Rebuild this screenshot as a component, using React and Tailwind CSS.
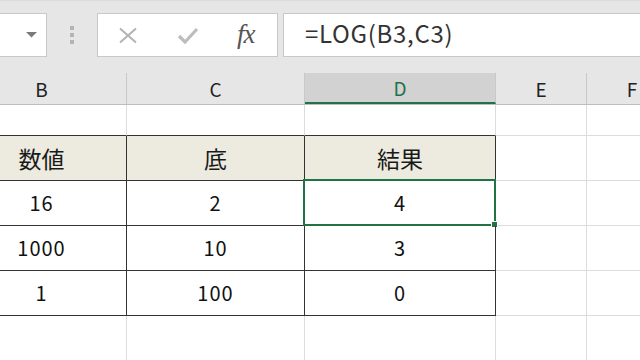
import React from "react";

function HeaderCell({ label, w, selected }) {
  return (
    <div
      className={
        "h-full flex items-center justify-center shrink-0 border-r border-[#c8c8c8] text-[19px] " +
        (selected
          ? "bg-[#d2d2d2] text-[#217346] border-b-2 border-b-[#217346]"
          : "text-[#222]")
      }
      style={{ width: w }}
    >
      <span className="leading-none">{label}</span>
    </div>
  );
}

export default function App() {
  const data = [
    ["16", "2", "4"],
    ["1000", "10", "3"],
    ["1", "100", "0"],
  ];
  return (
    <div className="w-[640px] h-[360px] overflow-hidden bg-white font-['Noto_Sans_CJK_JP','Noto_Sans',sans-serif] text-[#222]">
      {/* toolbar */}
      <div className="h-[73px] bg-[#e6e6e6] border-t border-[#dcdcdc] flex items-start pt-[12px]">
        <div className="w-[47px] h-[44px] shrink-0 bg-white border border-l-0 border-[#c8c8c8] flex items-center justify-end pr-[9px]">
          <svg width="11" height="6" viewBox="0 0 11 6">
            <polygon points="0,0 11,0 5.5,5.5" fill="#7a7a7a" />
          </svg>
        </div>
        <div className="w-[50px] h-[44px] shrink-0 flex flex-col items-center justify-center gap-[3px]">
          <div className="w-[4px] h-[4px] bg-[#b4b4b4]" />
          <div className="w-[4px] h-[4px] bg-[#b4b4b4]" />
          <div className="w-[4px] h-[4px] bg-[#b4b4b4]" />
        </div>
        <div className="w-[181px] h-[44px] shrink-0 bg-white border border-[#c8c8c8] flex items-center pl-[20px]">
          <svg width="20" height="17" viewBox="0 0 20 17" className="shrink-0">
            <path d="M2 1.5 L18 15.5 M18 1.5 L2 15.5" stroke="#b2b2b2" strokeWidth="2" fill="none" />
          </svg>
          <svg width="22" height="17" viewBox="0 0 22 17" className="shrink-0 ml-[39px]">
            <path d="M2 9 L8 15 L20 2" stroke="#bdbdbd" strokeWidth="3.2" fill="none" />
          </svg>
          <span className="ml-[38px] font-['Liberation_Serif',serif] italic text-[27px] leading-none text-[#555] tracking-[-1px] pb-[2px]">
            fx
          </span>
        </div>
        <div className="ml-[5px] w-[400px] h-[44px] shrink-0 bg-white border border-[#c8c8c8] flex items-center pl-[21px] pb-[4px]">
          <span className="text-[24px] leading-none text-[#333] tracking-[0.7px]">=LOG(B3,C3)</span>
        </div>
      </div>

      {/* column headers */}
      <div className="h-[32px] flex -ml-[43px] bg-[#e6e6e6] border-b border-[#bdbdbd]">
        <HeaderCell label="B" w={170} />
        <HeaderCell label="C" w={178} />
        <HeaderCell label="D" w={191} selected />
        <HeaderCell label="E" w={91} />
        <HeaderCell label="F" w={91} />
      </div>

      {/* grid */}
      <div className="grid grid-cols-[170px_178px_191px_91px_91px] -ml-[43px] grid-rows-[31px_45px_45px_45px_45px_45px]">
        {/* row 1 */}
        <div className="border-r border-r-[#dcdcdc] border-b border-b-[#333]" />
        <div className="border-r border-r-[#dcdcdc] border-b border-b-[#333]" />
        <div className="border-r border-r-[#dcdcdc] border-b border-b-[#333]" />
        <div className="border-r border-b border-[#dcdcdc]" />
        <div className="border-r border-b border-[#dcdcdc]" />

        {/* table header */}
        {["数値", "底", "結果"].map((t) => (
          <div
            key={t}
            className="bg-[#edebe0] border-r border-b border-[#333] flex items-center justify-center text-[23px] text-[#1a1a1a]"
          >
            {t}
          </div>
        ))}
        <div className="border-r border-b border-[#dcdcdc]" />
        <div className="border-r border-b border-[#dcdcdc]" />

        {data.map((row, ri) => (
          <React.Fragment key={ri}>
            {row.map((v, ci) => (
              <div
                key={ci}
                className="relative border-r border-b border-[#333] flex items-center justify-center text-[20px] tracking-[1px] text-[#111]"
              >
                {v}
                {ri === 0 && ci === 2 && (
                  <>
                    <div className="absolute -left-[2px] -top-[2px] -right-[1px] -bottom-[1px] border-2 border-[#217346]" />
                    <div className="absolute -right-[3px] -bottom-[3px] w-[7px] h-[7px] bg-[#217346] border border-white" />
                  </>
                )}
              </div>
            ))}
            <div className="border-r border-b border-[#dcdcdc]" />
            <div className="border-r border-b border-[#dcdcdc]" />
          </React.Fragment>
        ))}

        {/* last row */}
        <div className="border-r border-b border-[#dcdcdc]" />
        <div className="border-r border-b border-[#dcdcdc]" />
        <div className="border-r border-b border-[#dcdcdc]" />
        <div className="border-r border-b border-[#dcdcdc]" />
        <div className="border-r border-b border-[#dcdcdc]" />
      </div>
    </div>
  );
}
